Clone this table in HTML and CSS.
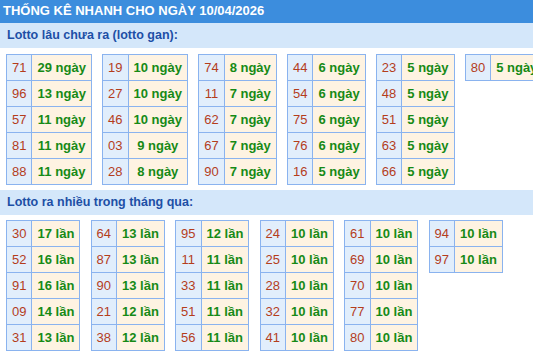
FILE: index.html
```html
<!DOCTYPE html>
<html lang="vi">
<head>
<meta charset="utf-8">
<title>Thống kê nhanh</title>
<link rel="stylesheet" href="styles.css">
</head>
<body>
<div class="page">
  <div class="title">THỐNG KÊ NHANH CHO NGÀY 10/04/2026</div>

  <div class="section-title">Lotto lâu chưa ra (lotto gan):</div>
  <div class="grid grid-first">
    <table class="lt"><tbody>
      <tr><td class="num">71</td><td class="val">29 ngày</td></tr>
      <tr><td class="num">96</td><td class="val">13 ngày</td></tr>
      <tr><td class="num">57</td><td class="val">11 ngày</td></tr>
      <tr><td class="num">81</td><td class="val">11 ngày</td></tr>
      <tr><td class="num">88</td><td class="val">11 ngày</td></tr>
    </tbody></table>
    <table class="lt"><tbody>
      <tr><td class="num">19</td><td class="val">10 ngày</td></tr>
      <tr><td class="num">27</td><td class="val">10 ngày</td></tr>
      <tr><td class="num">46</td><td class="val">10 ngày</td></tr>
      <tr><td class="num">03</td><td class="val">9 ngày</td></tr>
      <tr><td class="num">28</td><td class="val">8 ngày</td></tr>
    </tbody></table>
    <table class="lt"><tbody>
      <tr><td class="num">74</td><td class="val">8 ngày</td></tr>
      <tr><td class="num">11</td><td class="val">7 ngày</td></tr>
      <tr><td class="num">62</td><td class="val">7 ngày</td></tr>
      <tr><td class="num">67</td><td class="val">7 ngày</td></tr>
      <tr><td class="num">90</td><td class="val">7 ngày</td></tr>
    </tbody></table>
    <table class="lt"><tbody>
      <tr><td class="num">44</td><td class="val">6 ngày</td></tr>
      <tr><td class="num">54</td><td class="val">6 ngày</td></tr>
      <tr><td class="num">75</td><td class="val">6 ngày</td></tr>
      <tr><td class="num">76</td><td class="val">6 ngày</td></tr>
      <tr><td class="num">16</td><td class="val">5 ngày</td></tr>
    </tbody></table>
    <table class="lt"><tbody>
      <tr><td class="num">23</td><td class="val">5 ngày</td></tr>
      <tr><td class="num">48</td><td class="val">5 ngày</td></tr>
      <tr><td class="num">51</td><td class="val">5 ngày</td></tr>
      <tr><td class="num">63</td><td class="val">5 ngày</td></tr>
      <tr><td class="num">66</td><td class="val">5 ngày</td></tr>
    </tbody></table>
    <table class="lt"><tbody>
      <tr><td class="num">80</td><td class="val">5 ngày</td></tr>
    </tbody></table>
  </div>

  <div class="section-title">Lotto ra nhiều trong tháng qua:</div>
  <div class="grid">
    <table class="lt"><tbody>
      <tr><td class="num">30</td><td class="val">17 lần</td></tr>
      <tr><td class="num">52</td><td class="val">16 lần</td></tr>
      <tr><td class="num">91</td><td class="val">16 lần</td></tr>
      <tr><td class="num">09</td><td class="val">14 lần</td></tr>
      <tr><td class="num">31</td><td class="val">13 lần</td></tr>
    </tbody></table>
    <table class="lt"><tbody>
      <tr><td class="num">64</td><td class="val">13 lần</td></tr>
      <tr><td class="num">87</td><td class="val">13 lần</td></tr>
      <tr><td class="num">90</td><td class="val">13 lần</td></tr>
      <tr><td class="num">21</td><td class="val">12 lần</td></tr>
      <tr><td class="num">38</td><td class="val">12 lần</td></tr>
    </tbody></table>
    <table class="lt"><tbody>
      <tr><td class="num">95</td><td class="val">12 lần</td></tr>
      <tr><td class="num">11</td><td class="val">11 lần</td></tr>
      <tr><td class="num">33</td><td class="val">11 lần</td></tr>
      <tr><td class="num">51</td><td class="val">11 lần</td></tr>
      <tr><td class="num">56</td><td class="val">11 lần</td></tr>
    </tbody></table>
    <table class="lt"><tbody>
      <tr><td class="num">24</td><td class="val">10 lần</td></tr>
      <tr><td class="num">25</td><td class="val">10 lần</td></tr>
      <tr><td class="num">28</td><td class="val">10 lần</td></tr>
      <tr><td class="num">32</td><td class="val">10 lần</td></tr>
      <tr><td class="num">41</td><td class="val">10 lần</td></tr>
    </tbody></table>
    <table class="lt"><tbody>
      <tr><td class="num">61</td><td class="val">10 lần</td></tr>
      <tr><td class="num">69</td><td class="val">10 lần</td></tr>
      <tr><td class="num">70</td><td class="val">10 lần</td></tr>
      <tr><td class="num">77</td><td class="val">10 lần</td></tr>
      <tr><td class="num">80</td><td class="val">10 lần</td></tr>
    </tbody></table>
    <table class="lt"><tbody>
      <tr><td class="num">94</td><td class="val">10 lần</td></tr>
      <tr><td class="num">97</td><td class="val">10 lần</td></tr>
    </tbody></table>
  </div>
</div>
</body>
</html>
```

FILE: styles.css
```css
html, body {
  margin: 0;
  padding: 0;
  background: #ffffff;
  overflow: hidden;
}

.page {
  font-family: "Liberation Sans", Arial, sans-serif;
  width: 533px;
}

.title {
  height: 23px;
  line-height: 22px;
  background: #3c8ddd;
  color: #ffffff;
  font-weight: bold;
  font-size: 13px;
  padding-left: 3px;
  white-space: nowrap;
}

.section-title {
  height: 25px;
  line-height: 25px;
  background: #d4e7fa;
  color: #1d4fa6;
  font-weight: bold;
  font-size: 12.5px;
  padding-left: 7px;
  white-space: nowrap;
}

.grid {
  display: flex;
  align-items: flex-start;
  gap: 10.2px;
  padding: 5px 6px 5px 6px;
}

.grid-first {
  padding-top: 6px;
}

.lt {
  border-collapse: collapse;
  flex: none;
  font-size: 13px;
}

.lt td {
  border: 1px solid #8ab3ef;
  padding: 0 5px;
  height: 25px;
  line-height: 25px;
  text-align: center;
  white-space: nowrap;
  box-sizing: border-box;
}

.lt .num {
  background: #e1eefc;
  color: #b43d1c;
}

.lt .val {
  background: #fef3e2;
  color: #168a16;
  font-weight: bold;
}
```
